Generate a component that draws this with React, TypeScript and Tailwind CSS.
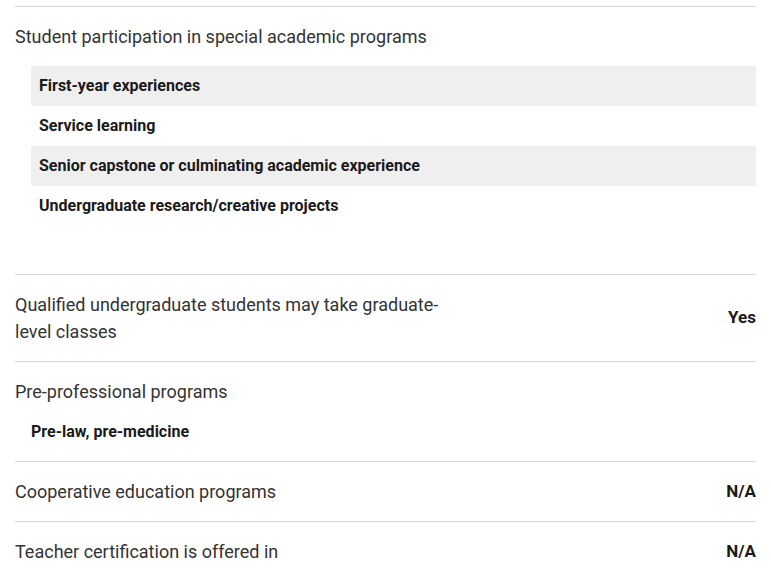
import React from "react";

export default function App() {
  const rows = [
    "First-year experiences",
    "Service learning",
    "Senior capstone or culminating academic experience",
    "Undergraduate research/creative projects",
  ];
  return (
    <div className="w-[771px] h-[572px] overflow-hidden bg-white px-[15px] pt-[6px] font-[Roboto,sans-serif]">
      <div className="border-t border-[#d4d4d4] pt-4 pb-[48px]">
        <div className="text-[18px] leading-[27px] text-[#333333]">
          Student participation in special academic programs
        </div>
        <div className="mt-4 ml-4 flex flex-col">
          {rows.map((r, i) => (
            <div
              key={r}
              className={`h-[40px] flex items-center px-2 text-[16px] font-bold text-[#1a1a1a] ${
                i % 2 === 0 ? "bg-[#efeff0]" : "bg-white"
              }`}
            >
              {r}
            </div>
          ))}
        </div>
      </div>

      <div className="border-t border-[#d4d4d4] py-4 flex items-center justify-between">
        <div className="w-[445px] text-[18px] leading-[27px] text-[#333333]">
          Qualified undergraduate students may take graduate-level classes
        </div>
        <div className="text-[17px] font-bold text-[#1a1a1a]">Yes</div>
      </div>

      <div className="border-t border-[#d4d4d4] pt-4 pb-4">
        <div className="text-[18px] leading-[27px] text-[#333333]">Pre-professional programs</div>
        <div className="mt-[14px] ml-4 text-[16px] leading-[26px] font-bold text-[#1a1a1a]">
          Pre-law, pre-medicine
        </div>
      </div>

      <div className="border-t border-[#d4d4d4] py-4 flex items-center justify-between">
        <div className="text-[18px] leading-[27px] text-[#333333]">Cooperative education programs</div>
        <div className="text-[17px] font-bold text-[#1a1a1a]">N/A</div>
      </div>

      <div className="border-t border-[#d4d4d4] py-4 flex items-center justify-between">
        <div className="text-[18px] leading-[27px] text-[#333333]">Teacher certification is offered in</div>
        <div className="text-[17px] font-bold text-[#1a1a1a]">N/A</div>
      </div>
    </div>
  );
}
